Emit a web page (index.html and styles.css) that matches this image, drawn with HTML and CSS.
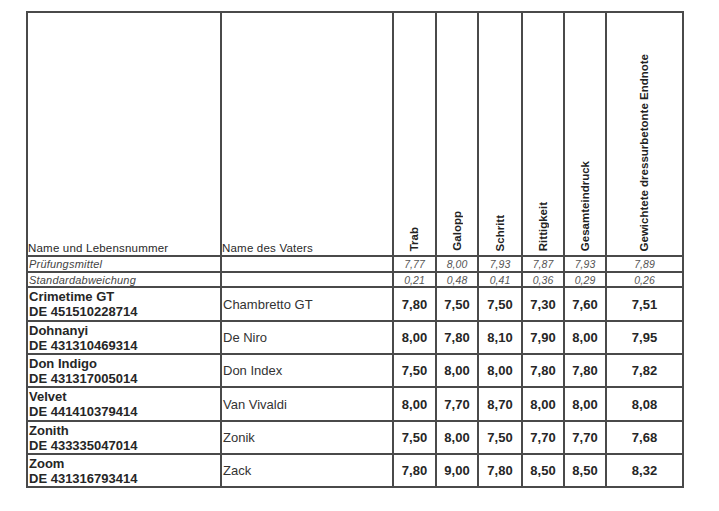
FILE: index.html
```html
<!DOCTYPE html>
<html lang="de">
<head>
<meta charset="utf-8">
<title>Ergebnisse</title>
<link rel="stylesheet" href="styles.css">
</head>
<body>
<table class="results">
  <colgroup>
    <col class="c-name">
    <col class="c-vater">
    <col class="c-n1">
    <col class="c-n2">
    <col class="c-n3">
    <col class="c-n4">
    <col class="c-n5">
    <col class="c-end">
  </colgroup>
  <thead>
    <tr class="head">
      <th class="h-text">Name und Lebensnummer</th>
      <th class="h-text">Name des Vaters</th>
      <th class="h-rot"><span>Trab</span></th>
      <th class="h-rot"><span>Galopp</span></th>
      <th class="h-rot"><span>Schritt</span></th>
      <th class="h-rot"><span>Rittigkeit</span></th>
      <th class="h-rot"><span>Gesamteindruck</span></th>
      <th class="h-rot"><span>Gewichtete dressurbetonte Endnote</span></th>
    </tr>
  </thead>
  <tbody>
    <tr class="stat s1">
      <td class="lbl">Prüfungsmittel</td><td></td>
      <td>7,77</td><td>8,00</td><td>7,93</td><td>7,87</td><td>7,93</td><td>7,89</td>
    </tr>
    <tr class="stat s2">
      <td class="lbl">Standardabweichung</td><td></td>
      <td>0,21</td><td>0,48</td><td>0,41</td><td>0,36</td><td>0,29</td><td>0,26</td>
    </tr>
    <tr class="row tall">
      <td class="horse">Crimetime GT<br>DE 451510228714</td><td class="sire">Chambretto GT</td>
      <td>7,80</td><td>7,50</td><td>7,50</td><td>7,30</td><td>7,60</td><td>7,51</td>
    </tr>
    <tr class="row">
      <td class="horse">Dohnanyi<br>DE 431310469314</td><td class="sire">De Niro</td>
      <td>8,00</td><td>7,80</td><td>8,10</td><td>7,90</td><td>8,00</td><td>7,95</td>
    </tr>
    <tr class="row">
      <td class="horse">Don Indigo<br>DE 431317005014</td><td class="sire">Don Index</td>
      <td>7,50</td><td>8,00</td><td>8,00</td><td>7,80</td><td>7,80</td><td>7,82</td>
    </tr>
    <tr class="row tall">
      <td class="horse">Velvet<br>DE 441410379414</td><td class="sire">Van Vivaldi</td>
      <td>8,00</td><td>7,70</td><td>8,70</td><td>8,00</td><td>8,00</td><td>8,08</td>
    </tr>
    <tr class="row">
      <td class="horse">Zonith<br>DE 433335047014</td><td class="sire">Zonik</td>
      <td>7,50</td><td>8,00</td><td>7,50</td><td>7,70</td><td>7,70</td><td>7,68</td>
    </tr>
    <tr class="row">
      <td class="horse">Zoom<br>DE 431316793414</td><td class="sire">Zack</td>
      <td>7,80</td><td>9,00</td><td>7,80</td><td>8,50</td><td>8,50</td><td>8,32</td>
    </tr>
  </tbody>
</table>
</body>
</html>
```
FILE: styles.css
```css
html, body {
  margin: 0;
  padding: 0;
  background: #ffffff;
}

body {
  font-family: "Liberation Sans", Arial, sans-serif;
  color: #222;
}

.results {
  border-collapse: collapse;
  table-layout: fixed;
  width: 658px;
  margin: 11px 0 0 26px;
}

.c-name { width: 194px; }
.c-vater { width: 172px; }
.c-n1 { width: 43px; }
.c-n2 { width: 42px; }
.c-n3 { width: 44px; }
.c-n4 { width: 42px; }
.c-n5 { width: 42px; }
.c-end { width: 77px; }

.results th,
.results td {
  border: 2px solid #4a4a4a;
  padding: 0;
}

.head {
  height: 244px;
}

.h-text {
  vertical-align: bottom;
  text-align: left;
  font-weight: normal;
  font-size: 11.5px;
  letter-spacing: 0.2px;
  color: #2a2a2a;
  padding: 0 0 1px 1px;
  line-height: 14px;
}

.h-rot {
  vertical-align: bottom;
  text-align: center;
  padding-bottom: 1px;
}

.h-rot span {
  display: inline-block;
  writing-mode: vertical-rl;
  transform: rotate(180deg);
  font-size: 11.5px;
  font-weight: bold;
  color: #222;
  line-height: 13px;
}

.stat td {
  font-size: 10.5px;
  font-style: italic;
  color: #555;
  text-align: center;
  line-height: 12px;
}

.stat.s1 { height: 16px; }
.stat.s2 { height: 15px; }

.stat td.lbl {
  text-align: left;
  font-size: 11px;
  letter-spacing: 0.2px;
  padding-left: 1px;
  color: #444;
}

.row {
  height: 33px;
}

.row.tall {
  height: 34px;
}

.row td {
  text-align: center;
  font-weight: bold;
  font-size: 13px;
  color: #262626;
  vertical-align: middle;
}

.row td.horse {
  text-align: left;
  padding-left: 1px;
  line-height: 15px;
  font-size: 13px;
}

.row td.sire {
  text-align: left;
  font-weight: normal;
  padding-left: 1px;
  color: #333;
}
```
